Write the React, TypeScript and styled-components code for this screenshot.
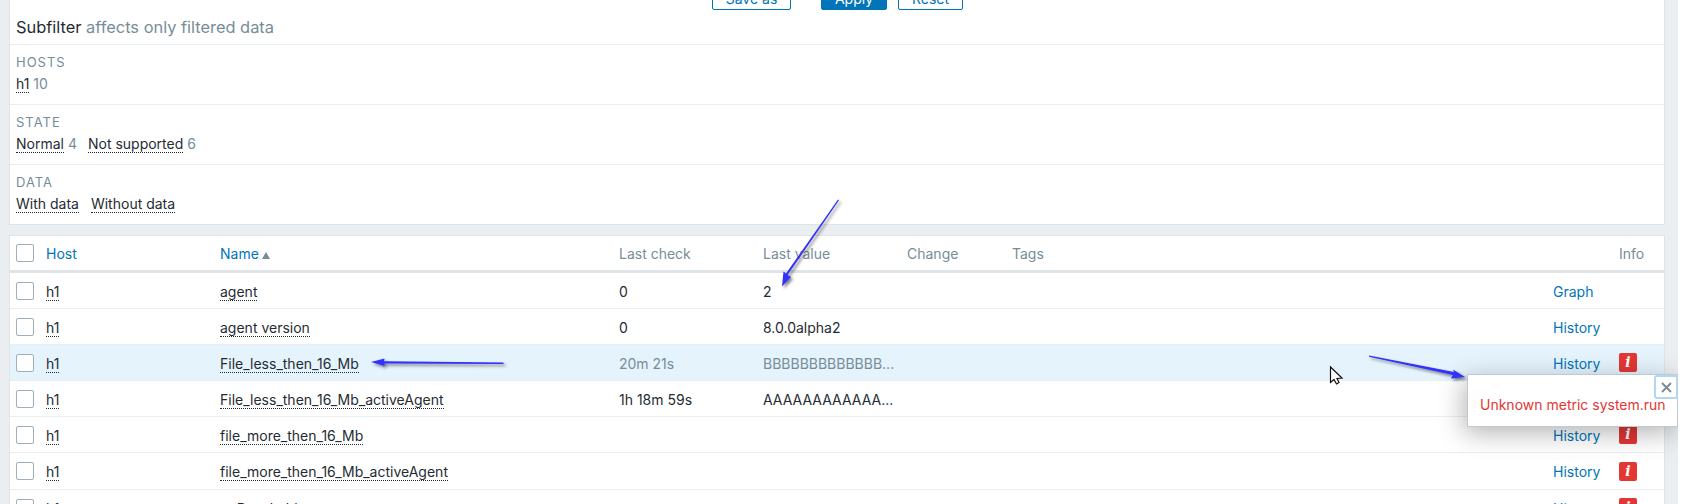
import React from 'react';
import styled, { createGlobalStyle } from 'styled-components';

const Global = createGlobalStyle`
  html, body {
    margin: 0;
    height: 504px;
    overflow: hidden;
    background: #ffffff;
  }
  body {
    font-family: Inter, "Open Sans", sans-serif;
    font-size: 14px;
    color: #1f2c33;
  }
`;

const items = [
  { name: 'agent', check: '0', value: '2', action: 'Graph' },
  { name: 'agent version', check: '0', value: '8.0.0alpha2', action: 'History' },
  { name: 'File_less_then_16_Mb', check: '20m 21s', value: 'BBBBBBBBBBBBB...', action: 'History', info: true, active: true },
  { name: 'File_less_then_16_Mb_activeAgent', check: '1h 18m 59s', value: 'AAAAAAAAAAAA...', action: 'History', info: true },
  { name: 'file_more_then_16_Mb', check: '', value: '', action: 'History', info: true },
  { name: 'file_more_then_16_Mb_activeAgent', check: '', value: '', action: 'History', info: true, tall: true },
  { name: 'noReachable', check: '', value: '', action: 'History', info: true },
];

const App = () => {
  return (
    <Page>
      <Global />
      <FilterPanel>
        <Buttons>
          <OutlineBtn $width={79}>Save as</OutlineBtn>
          <SolidBtn>Apply</SolidBtn>
          <OutlineBtn $width={65}>Reset</OutlineBtn>
        </Buttons>
        <SubfilterTitle>
          Subfilter <Muted>affects only filtered data</Muted>
        </SubfilterTitle>
        <FilterGroup>
          <GroupLabel>HOSTS</GroupLabel>
          <GroupValues $gap={11}>
            <span>
              <Dotted>h1</Dotted> <Count>10</Count>
            </span>
          </GroupValues>
        </FilterGroup>
        <FilterGroup>
          <GroupLabel>STATE</GroupLabel>
          <GroupValues $gap={11}>
            <span>
              <Dotted>Normal</Dotted> <Count>4</Count>
            </span>
            <span>
              <Dotted>Not supported</Dotted> <Count>6</Count>
            </span>
          </GroupValues>
        </FilterGroup>
        <FilterGroup>
          <GroupLabel>DATA</GroupLabel>
          <GroupValues $gap={12}>
            <Dotted>With data</Dotted>
            <Dotted>Without data</Dotted>
          </GroupValues>
        </FilterGroup>
      </FilterPanel>

      <TablePanel>
        <HeadRow>
          <CheckCell>
            <Check />
          </CheckCell>
          <LinkHead>Host</LinkHead>
          <LinkHead>
            Name
            <SortArrow />
          </LinkHead>
          <HeadCell>Last check</HeadCell>
          <HeadCell>Last value</HeadCell>
          <HeadCell>Change</HeadCell>
          <HeadCell>Tags</HeadCell>
          <HeadCell />
          <HeadCell>Info</HeadCell>
        </HeadRow>
        {items.map((item) => (
          <Row key={item.name} $active={item.active} $tall={item.tall}>
            <CheckCell>
              <Check />
            </CheckCell>
            <Cell>
              <Dotted>h1</Dotted>
            </Cell>
            <Cell>
              <Dotted>{item.name}</Dotted>
            </Cell>
            <Cell $dim={item.active}>{item.check}</Cell>
            <Cell $dim={item.active}>{item.value}</Cell>
            <Cell />
            <Cell />
            <ActionCell>{item.action}</ActionCell>
            <IconCell>{item.info && <InfoIcon>i</InfoIcon>}</IconCell>
          </Row>
        ))}
      </TablePanel>

      <Popup>
        <CloseBtn>
          <svg width="11" height="11" viewBox="0 0 11 11">
            <path d="M1 1 L10 10 M10 1 L1 10" stroke="#7b8a94" strokeWidth="1.8" fill="none" />
          </svg>
        </CloseBtn>
        Unknown metric system.run
      </Popup>

      <Annotations width="1682" height="504" viewBox="0 0 1682 504">
        <defs>
          <filter id="arrowShadow" x="-20%" y="-20%" width="140%" height="140%">
            <feDropShadow dx="2" dy="2" stdDeviation="1.6" floodColor="#000000" floodOpacity="0.5" />
          </filter>
        </defs>
        <g filter="url(#arrowShadow)" fill="#3030f8" stroke="none">
          <path d="M839 200.2 L787.6 275 L791 277 L782 286.5 L783.5 271.5 L786 273.5 L838 199.6 Z" />
          <path d="M503.5 362.6 L384 361.2 L384.5 358.5 L371 362 L384.5 366 L384.5 363.6 L503.5 364 Z" />
          <path d="M1369 355.4 L1454 372 L1453 369.5 L1465 377 L1451 378.5 L1452.8 375 L1369 356.8 Z" />
        </g>
        <path
          d="M1330.5 367 L1330.5 382.5 L1334 379.5 L1336.5 384 L1339 382.5 L1337 378.5 L1342 378 Z"
          fill="#ffffff"
          stroke="#111111"
          strokeWidth="1.2"
        />
      </Annotations>
    </Page>
  );
};

export default App;

const Page = styled.div`
  position: relative;
  box-sizing: border-box;
  width: 1678px;
  height: 504px;
  padding: 0 13px 0 9px;
  background: #ebeef0;
  overflow: hidden;
`;

const FilterPanel = styled.section`
  background: #ffffff;
  border: 1px solid #dfe4e7;
  border-top: none;
`;

const Buttons = styled.div`
  display: flex;
  justify-content: center;
  gap: 10px;
  height: 24px;
  margin-top: -14px;
  padding-left: 1px;
`;

const OutlineBtn = styled.button<{ $width: number }>`
  box-sizing: border-box;
  width: ${(p) => p.$width}px;
  height: 24px;
  border: 1px solid #0275b8;
  border-radius: 2px;
  background: #ffffff;
  color: #0275b8;
  font: inherit;
`;

const SolidBtn = styled.button`
  box-sizing: border-box;
  width: 66px;
  height: 24px;
  margin: 0 1px 0 20px;
  border: 1px solid #0275b8;
  border-radius: 2px;
  background: #0275b8;
  color: #ffffff;
  font: inherit;
`;

const SubfilterTitle = styled.div`
  box-sizing: border-box;
  height: 34px;
  padding: 7px 6px 0;
  font-size: 16.4px;
  line-height: 20px;
`;

const Muted = styled.span`
  color: #768d99;
`;

const FilterGroup = styled.div`
  box-sizing: border-box;
  height: 60px;
  padding: 10px 6px 0;
  border-top: 1px solid #ebeef0;
`;

const GroupLabel = styled.div`
  color: #768d99;
  font-size: 13px;
  line-height: 14px;
  letter-spacing: 1px;
`;

const GroupValues = styled.div<{ $gap: number }>`
  display: flex;
  gap: ${(p) => p.$gap}px;
  margin-top: 7px;
  line-height: 16px;
`;

const Dotted = styled.span`
  border-bottom: 1px dotted #1f2c33;
`;

const Count = styled.span`
  color: #768d99;
`;

const TablePanel = styled.section`
  margin-top: 10px;
  background: #ffffff;
  border: 1px solid #dfe4e7;
  border-bottom: none;
`;

const columns = `grid-template-columns: 36px 174px 399px 144px 144px 105px 541px 66px 1fr;`;

const HeadRow = styled.div`
  display: grid;
  ${columns}
  align-items: center;
  box-sizing: border-box;
  height: 37px;
  border-bottom: 3px solid #dfe4e7;
`;

const Row = styled.div<{ $active?: boolean; $tall?: boolean }>`
  display: grid;
  ${columns}
  align-items: center;
  box-sizing: border-box;
  height: ${(p) => (p.$tall ? 37 : 36)}px;
  border-bottom: 1px solid #ebeef0;
  background: ${(p) => (p.$active ? '#e5f3fd' : '#ffffff')};
`;

const CheckCell = styled.div`
  display: flex;
  padding-left: 6px;
`;

const Check = styled.span`
  box-sizing: border-box;
  display: block;
  width: 18px;
  height: 18px;
  background: #ffffff;
  border: 1px solid #9fb0ba;
  border-radius: 2px;
`;

const HeadCell = styled.div`
  color: #768d99;
`;

const LinkHead = styled.div`
  color: #0275b8;
`;

const SortArrow = styled.span`
  display: inline-block;
  margin-left: 3px;
  border-left: 4px solid transparent;
  border-right: 4px solid transparent;
  border-bottom: 7px solid #768d99;
`;

const Cell = styled.div<{ $dim?: boolean }>`
  padding-top: 1px;
  color: ${(p) => (p.$dim ? '#768d99' : 'inherit')};
`;

const IconCell = styled.div``;

const ActionCell = styled.div`
  padding-top: 1px;
  color: #0275b8;
`;

const InfoIcon = styled.span`
  display: block;
  width: 18px;
  height: 19px;
  border-radius: 2px;
  background: #e33734;
  color: #ffffff;
  font-family: "DejaVu Serif", serif;
  font-style: italic;
  font-weight: 700;
  font-size: 14px;
  line-height: 19px;
  text-align: center;
`;

const Popup = styled.div`
  position: absolute;
  left: 1467px;
  top: 374px;
  box-sizing: border-box;
  width: 211px;
  height: 53px;
  padding: 21px 0 0 12px;
  background: #ffffff;
  border: 1px solid #bfcbd2;
  color: #e33734;
  line-height: 18px;
  white-space: nowrap;
  box-shadow: -3px 6px 26px rgba(0, 0, 0, 0.3);
`;

const CloseBtn = styled.span`
  position: absolute;
  right: -1px;
  top: 0;
  box-sizing: border-box;
  display: flex;
  align-items: center;
  justify-content: center;
  width: 24px;
  height: 24px;
  background: #ffffff;
  border: 2px solid #b3d6f2;
  border-radius: 3px;
`;

const Annotations = styled.svg`
  position: absolute;
  left: 0;
  top: 0;
  pointer-events: none;
`;
